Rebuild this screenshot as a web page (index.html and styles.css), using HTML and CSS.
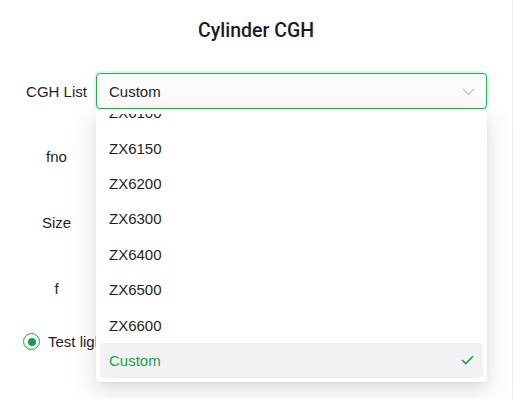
FILE: index.html
```html
<!DOCTYPE html>
<html>
<head>
<meta charset="utf-8">
<link rel="stylesheet" href="styles.css">
</head>
<body>
<div class="page">
  <h1 class="title">Cylinder CGH</h1>
  <div class="form">
    <div class="row">
      <label class="label">CGH List</label>
      <div class="control select-wrap">
        <div class="select">
          <span class="select-value">Custom</span>
          <svg class="chevron" width="13" height="8" viewBox="0 0 13 8"><path d="M1 1 L6.5 6.5 L12 1" fill="none" stroke="#c2c2c6" stroke-width="1.2"/></svg>
        </div>
        <div class="dropdown">
          <div class="list">
            <div class="items">
              <div class="item">ZX6100</div>
              <div class="item">ZX6150</div>
              <div class="item">ZX6200</div>
              <div class="item">ZX6300</div>
              <div class="item">ZX6400</div>
              <div class="item">ZX6500</div>
              <div class="item">ZX6600</div>
              <div class="item selected">Custom
                <svg class="check" width="13" height="10" viewBox="0 0 13 10"><path d="M1 5 L4.8 8.6 L12 1.2" fill="none" stroke="#1a9f4a" stroke-width="1.6"/></svg>
              </div>
            </div>
          </div>
        </div>
      </div>
    </div>
    <div class="row">
      <label class="label">fno</label>
      <div class="control"><div class="input"></div></div>
    </div>
    <div class="row">
      <label class="label">Size</label>
      <div class="control"><div class="input"></div></div>
    </div>
    <div class="row">
      <label class="label">f</label>
      <div class="control"><div class="input"></div></div>
    </div>
    <div class="radio-row">
      <span class="radio"><span class="dot"></span></span>
      <span class="radio-text">Test light path</span>
    </div>
  </div>
</div>
</body>
</html>
```
FILE: styles.css
```css
* { box-sizing: border-box; }
html, body { margin: 0; padding: 0; background: #fff; }
body {
  font-family: "Liberation Sans", Arial, sans-serif;
  color: #1f1f1f;
  overflow: hidden;
}
.page {
  width: 513px;
  height: 399px;
  border-right: 1px solid #ebebef;
  position: relative;
}
.title {
  margin: 0;
  padding-top: 19px;
  height: 73px;
  font-family: Roboto, "Liberation Sans", sans-serif;
  font-size: 19.5px;
  line-height: 24px;
  font-weight: 500;
  text-align: center;
  color: #1c1c1c;
}
.form {
  display: flex;
  flex-direction: column;
  gap: 29.7px;
}
.row {
  display: flex;
  align-items: center;
  height: 36px;
}
.label {
  width: 96px;
  padding-left: 18px;
  padding-right: 1px;
  text-align: center;
  font-size: 15px;
}
.control {
  width: 391px;
  height: 36px;
  position: relative;
}
.input {
  height: 36px;
  border: 1px solid #d9d9d9;
  border-radius: 4px;
}
.select {
  height: 36px;
  border: 1px solid #2aad55;
  border-radius: 4px;
  box-shadow: 0 0 0 2px rgba(42, 173, 85, 0.12);
  background: #fcfcfc;
  display: flex;
  align-items: center;
  justify-content: space-between;
  padding: 0 11px 0 12px;
  font-size: 15px;
}
.select-value { color: #1f1f1f; }
.chevron { margin-top: 1px; }
.dropdown {
  position: absolute;
  left: 0;
  top: 37px;
  width: 391px;
  height: 272px;
  background: #fff;
  border-radius: 4px;
  padding: 4px;
  box-shadow: 0 6px 16px rgba(0, 0, 0, 0.08), 0 3px 6px -4px rgba(0, 0, 0, 0.12), 0 9px 28px 8px rgba(0, 0, 0, 0.05);
  z-index: 10;
}
.list {
  height: 264px;
  overflow: hidden;
}
.items {
  margin-top: -19px;
  display: flex;
  flex-direction: column;
}
.item {
  height: 35.4px;
  display: flex;
  align-items: center;
  justify-content: space-between;
  padding: 0 9px;
  font-size: 15px;
  color: #1f1f1f;
  border-radius: 3px;
}
.item.selected {
  background: #f2f2f4;
  color: #1a9f4a;
}
.check { margin-right: 0; }
.radio-row {
  margin-top: -4px;
  display: flex;
  align-items: center;
  padding-left: 23px;
  height: 20px;
  font-size: 15px;
}
.radio {
  width: 17px;
  height: 17px;
  border: 1.6px solid #1a9f4a;
  border-radius: 50%;
  display: flex;
  align-items: center;
  justify-content: center;
  margin-right: 8px;
}
.dot {
  width: 8px;
  height: 8px;
  border-radius: 50%;
  background: #1a9f4a;
}
.radio-text { white-space: nowrap; }
```
